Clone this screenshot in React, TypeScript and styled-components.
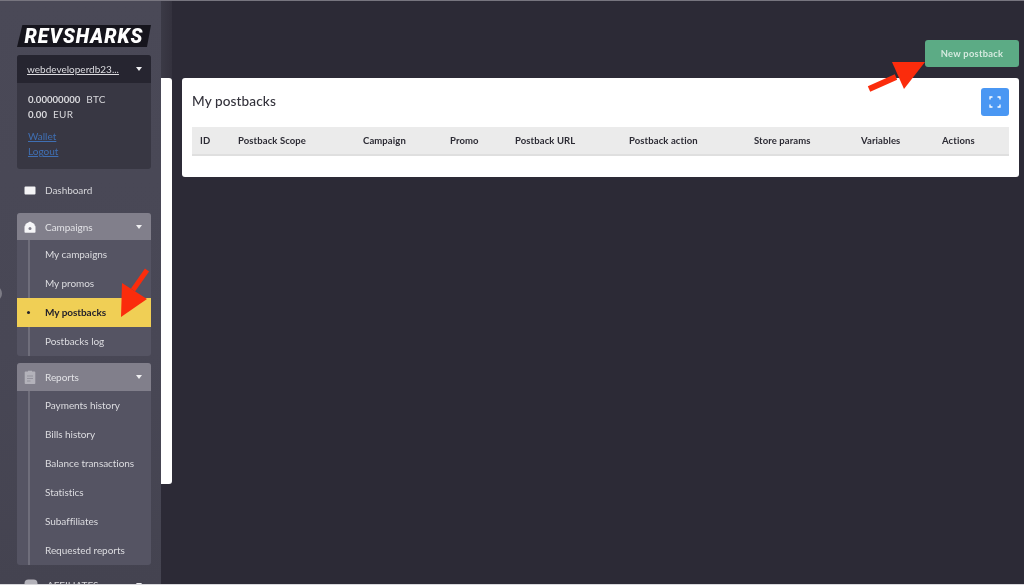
import React from "react";
import styled, { createGlobalStyle } from "styled-components";

const Global = createGlobalStyle`
  html, body { margin: 0; padding: 0; height: 585px; overflow: hidden; background: #2c2a36; }
  body { font-family: Lato, "Open Sans", Arial, sans-serif; }
  * { box-sizing: border-box; }
`;

const Page = styled.div`
  position: relative;
  display: flex;
  width: 1024px;
  height: 585px;
  overflow: hidden;
  background: #2c2a36;
  border-top: 1px solid #77757f;
  border-bottom: 1px solid #d8d8dc;
  filter: blur(0.5px);
`;

const Sidebar = styled.aside`
  flex: 0 0 161px;
  height: 583px;
  padding: 24px 10px 0 17px;
  overflow: hidden;
  background: linear-gradient(180deg, #4a4957 0%, #484755 60%, #444350 100%);
`;

const Logo = styled.div`
  display: flex;
  align-items: center;
  justify-content: center;
  width: 134px;
  height: 22px;
  background: #16151d;
  clip-path: polygon(4% 0, 100% 0, 97% 100%, 0 100%);
  color: #fff;
  font: italic 900 19.5px Roboto, Lato, sans-serif;
  letter-spacing: 1px;
`;

const Account = styled.section`
  margin-top: 8px;
  height: 114px;
  border-radius: 3px;
  background: #383743;
  overflow: hidden;
`;

const AccountHead = styled.div`
  display: flex;
  align-items: center;
  justify-content: space-between;
  height: 28px;
  padding: 0 9px 0 10px;
  background: #262530;
  color: #dcdce0;
  font-size: 10px;
  text-decoration: underline;
`;

const AccountBody = styled.div`
  padding: 9px 11px;
  font-size: 10px;
  line-height: 14px;
  color: #d8d8dc;
`;

const Balance = styled.div`
  height: 14.5px;
  letter-spacing: 0.3px;
  b { font-size: 9.6px; letter-spacing: 0; font-weight: 700; margin-right: 6px; }
`;

const AccountLink = styled.a`
  display: block;
  color: #3f6fb3;
  text-decoration: underline;
  line-height: 15px;
  &:first-of-type { margin-top: 8px; }
`;

const Caret = styled.span`
  flex: none;
  width: 0;
  height: 0;
  border-left: 3.5px solid transparent;
  border-right: 3.5px solid transparent;
  border-top: 4px solid #f0f0f2;
`;

const PlainItem = styled.div`
  display: flex;
  align-items: center;
  height: 28px;
  margin-top: ${p => p.$gap}px;
  padding: 0 9px 0 7px;
  color: #d6d6da;
  font-size: 10px;
  letter-spacing: -0.05px;
`;

const Group = styled.section`
  margin-top: ${p => p.$gap}px;
  border-radius: 3px;
  background: #555463;
  overflow: hidden;
`;

const GroupHead = styled.div`
  display: flex;
  align-items: center;
  height: ${p => p.$height}px;
  padding: 0 9px 0 7px;
  background: #817f8b;
  color: #e2e2e6;
  font-size: 10px;
  letter-spacing: -0.05px;
`;

const ItemTitle = styled.span`
  flex: 1;
  margin-left: 9px;
`;

const Child = styled.div`
  display: flex;
  align-items: center;
  position: relative;
  height: 29px;
  padding: 0 0 1px 28px;
  color: ${p => (p.$active ? "#24222b" : "#dcdce0")};
  background: ${p => (p.$active ? "#f0cf55" : "transparent")};
  font-size: 10px;
  font-weight: ${p => (p.$active ? 700 : 400)};
  letter-spacing: -0.05px;
  &::before {
    content: "";
    position: absolute;
    left: ${p => (p.$active ? 10 : 11)}px;
    top: ${p => (p.$active ? 13 : 0)}px;
    width: ${p => (p.$active ? 3 : 1.5)}px;
    height: ${p => (p.$active ? 3 : 29)}px;
    border-radius: ${p => (p.$active ? "50%" : 0)};
    background: ${p => (p.$active ? "#24222b" : "#6f6e7b")};
  }
`;

const Handle = styled.div`
  position: absolute;
  left: -8px;
  top: 286px;
  width: 10px;
  height: 13px;
  border-radius: 50%;
  background: #7d7c86;
`;

const Strip = styled.div`
  flex: 0 0 11px;
  display: flex;
  flex-direction: column;
  background: linear-gradient(90deg, #3b3a46, #34323e);
  height: 483px;
`;

const StripFill = styled.div`
  margin: 77px 0 0;
  flex: 1;
  background: #fff;
  border-radius: 0 3px 3px 0;
`;

const Main = styled.main`
  flex: 1;
  display: flex;
  flex-direction: column;
  padding: 39px 5px 0 10px;
`;

const NewButton = styled.button`
  align-self: flex-end;
  width: 94px;
  height: 27px;
  border: 0;
  border-radius: 3px;
  background: #5cab85;
  color: #d5eadf;
  font: 700 9.3px Lato, sans-serif;
  letter-spacing: 0.3px;
`;

const Card = styled.section`
  margin-top: 11px;
  height: 99px;
  padding: 10px 10px 0;
  border-radius: 3px;
  background: #fff;
`;

const CardHead = styled.div`
  display: flex;
  align-items: flex-start;
  justify-content: space-between;
  height: 28px;
`;

const CardTitle = styled.h2`
  margin: 4px 0 0;
  color: #33323b;
  font-size: 13.6px;
  line-height: 18px;
  font-weight: 500;
  letter-spacing: 0.1px;
`;

const ExpandButton = styled.button`
  display: flex;
  align-items: center;
  justify-content: center;
  width: 28px;
  height: 28px;
  padding: 0;
  border: 0;
  border-radius: 3px;
  background: #4a97f3;
`;

const TableHead = styled.div`
  display: grid;
  grid-template-columns: 38px 125px 87px 65px 114px 125px 107px 81px 1fr;
  align-items: center;
  height: 29px;
  margin-top: 11px;
  padding-left: 8px;
  background: #ebebeb;
  border-bottom: 2px solid #dfdfdf;
  color: #2c2b34;
  font-size: 9.5px;
  font-weight: 700;
  letter-spacing: 0.1px;
`;

const ArrowSvg = styled.svg`
  position: absolute;
  left: ${p => p.$x}px;
  top: ${p => p.$y}px;
`;

const campaignItems = ["My campaigns", "My promos", "My postbacks", "Postbacks log"];
const reportItems = ["Payments history", "Bills history", "Balance transactions", "Statistics", "Subaffiliates", "Requested reports"];
const columns = ["ID", "Postback Scope", "Campaign", "Promo", "Postback URL", "Postback action", "Store params", "Variables", "Actions"];

export default function App() {
  return (
    <Page>
      <Global />
      <Sidebar>
        <Logo>REVSHARKS</Logo>
        <Account>
          <AccountHead>
            <span>webdeveloperdb23...</span>
            <Caret />
          </AccountHead>
          <AccountBody>
            <Balance><b>0.00000000</b>BTC</Balance>
            <Balance><b>0.00</b>EUR</Balance>
            <AccountLink>Wallet</AccountLink>
            <AccountLink>Logout</AccountLink>
          </AccountBody>
        </Account>
        <PlainItem $gap={7}>
          <svg width="12" height="9" viewBox="0 0 12 9"><path d="M1.500 0.500h9a1 1 0 0 1 1 1v6a1 1 0 0 1-1 1h-9a1 1 0 0 1-1-1v-6a1 1 0 0 1 1-1z" fill="#f4f4f6" /></svg>
          <ItemTitle>Dashboard</ItemTitle>
        </PlainItem>
        <Group $gap={9}>
          <GroupHead $height={27}>
            <svg width="12" height="12" viewBox="0 0 12 12"><path d="M6 0.500 10.500 3v1.200c.6.3 1 .8 1 1.500V11a.8.8 0 0 1-.8.8H1.300A.8.8 0 0 1 .5 11V5.700c0-.7.4-1.200 1-1.500V3z" fill="#f6f6f8" /><circle cx="6" cy="7.500" r="1.500" fill="#817f8b" /></svg>
            <ItemTitle>Campaigns</ItemTitle>
            <Caret />
          </GroupHead>
          {campaignItems.map(t => <Child key={t} $active={t === "My postbacks"}>{t}</Child>)}
        </Group>
        <Group $gap={7}>
          <GroupHead $height={28}>
            <svg width="12" height="14" viewBox="0 0 12 14"><path d="M1.500 1.500h2.500V.8h4v.7h2.500a.8.8 0 0 1 .8.8v10.900a.8.8 0 0 1-.8.8h-9a.8.8 0 0 1-.8-.8V2.300a.8.8 0 0 1 .8-.8z" fill="#b3b2ba" /><path d="M3 6h6M3 8.500h6M3 11h3.500" stroke="#8b8a95" strokeWidth=".8" /></svg>
            <ItemTitle>Reports</ItemTitle>
            <Caret />
          </GroupHead>
          {reportItems.map(t => <Child key={t}>{t}</Child>)}
        </Group>
        <PlainItem $gap={6}>
          <svg width="14" height="12" viewBox="0 0 14 12"><rect x="0.500" y="0.500" width="13" height="11" rx="4" fill="#b3b2ba" /></svg>
          <ItemTitle>AFFILIATES</ItemTitle>
          <Caret />
        </PlainItem>
      </Sidebar>
      <Handle />
      <Strip><StripFill /></Strip>
      <Main>
        <NewButton>New postback</NewButton>
        <Card>
          <CardHead>
            <CardTitle>My postbacks</CardTitle>
            <ExpandButton aria-label="Expand">
              <svg width="12" height="12" viewBox="0 0 12 12" fill="none" stroke="#fff" strokeWidth="1.300">
                <path d="M1 3.500V1h2.500M8.500 1H11v2.500M11 8.500V11H8.500M3.500 11H1V8.500" />
              </svg>
            </ExpandButton>
          </CardHead>
          <TableHead>
            {columns.map(c => <span key={c}>{c}</span>)}
          </TableHead>
        </Card>
      </Main>
      <ArrowSvg $x={115} $y={262} width="40" height="60" viewBox="0 0 40 60" aria-hidden="true">
        <path d="M32 7 18 27" stroke="#fb2c0c" strokeWidth="5" />
        <path d="M7 20 32 36 6 54z" fill="#fb2c0c" />
      </ArrowSvg>
      <ArrowSvg $x={864} $y={56} width="66" height="40" viewBox="0 0 66 40" aria-hidden="true">
        <path d="M5 32 32 20" stroke="#fb2c0c" strokeWidth="6" />
        <path d="M28 5H61L40 32z" fill="#fb2c0c" />
      </ArrowSvg>
    </Page>
  );
}
